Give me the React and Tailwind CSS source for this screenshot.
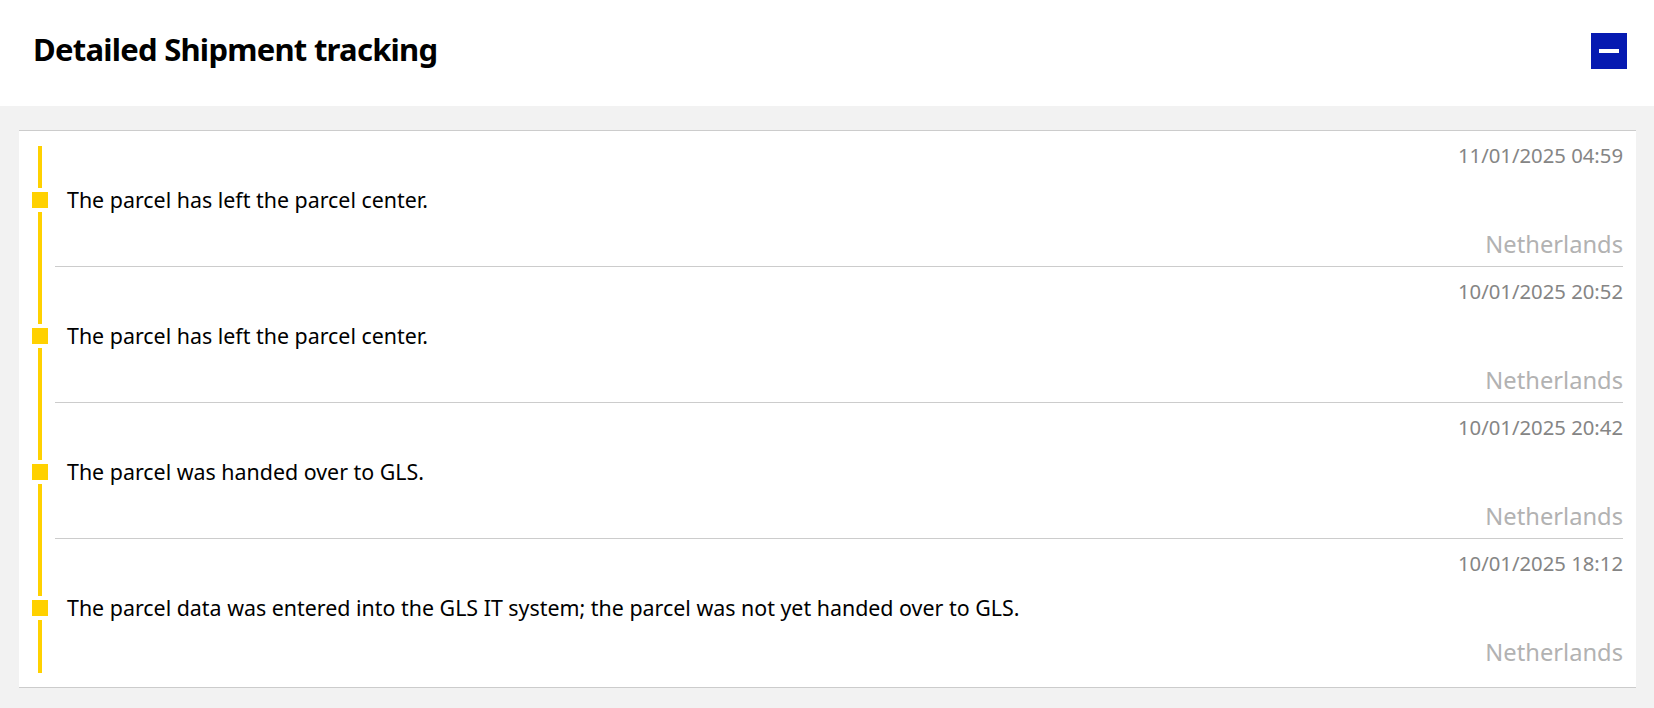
import React from "react";

const events = [
  { date: "11/01/2025 04:59", text: "The parcel has left the parcel center.", country: "Netherlands" },
  { date: "10/01/2025 20:52", text: "The parcel has left the parcel center.", country: "Netherlands" },
  { date: "10/01/2025 20:42", text: "The parcel was handed over to GLS.", country: "Netherlands" },
  {
    date: "10/01/2025 18:12",
    text: "The parcel data was entered into the GLS IT system; the parcel was not yet handed over to GLS.",
    country: "Netherlands",
  },
];

function Row({ ev, first, last }) {
  return (
    <div className={last ? "flex h-[135px]" : "flex h-[136px]"}>
      <div className="w-[36px] shrink-0">
        <div className="ml-[13px] flex h-full w-4 flex-col items-center">
          <div className={first ? "mt-[15px] h-[42px] w-1 bg-[#ffd100]" : "h-[57px] w-1 bg-[#ffd100]"} />
          <div className="mt-1 h-4 w-4 shrink-0 bg-[#ffd100]" />
          <div className={last ? "mt-1 mb-[1px] w-1 flex-1 bg-[#ffd100]" : "mt-1 w-1 flex-1 bg-[#ffd100]"} />
        </div>
      </div>
      <div
        className={
          "mr-[13px] flex flex-1 flex-col pt-[10px] pb-2 " + (last ? "" : "border-b border-[#cccccc]")
        }
      >
        <div className="text-right text-[20.3px] leading-7 text-[#858585]">{ev.date}</div>
        <div className="flex flex-1 items-center pl-[12px] text-[21.4px] leading-7 text-black">{ev.text}</div>
        <div className="text-right text-[23.7px] leading-7 text-[#b2b2b2]">{ev.country}</div>
      </div>
    </div>
  );
}

export default function App() {
  return (
    <div className="min-h-[708px] bg-[#f2f2f2] font-['Noto_Sans',sans-serif]">
      <div className="flex h-[106px] items-start justify-between bg-white pl-[33px] pr-[27px]">
        <h1 className="pt-[31px] text-[31px] font-bold leading-[36px] tracking-[-0.75px] text-black">
          Detailed Shipment tracking
        </h1>
        <button className="mt-[33px] flex h-9 w-9 items-center justify-center bg-[#061ab1]">
          <span className="block h-1 w-5 bg-white" />
        </button>
      </div>
      <div className="pl-[19px] pr-[18px] pt-[24px] pb-[20px]">
        <div className="border-y border-[#cccccc] bg-white pb-[13px]">
          {events.map((ev, i) => (
            <Row key={i} ev={ev} first={i === 0} last={i === events.length - 1} />
          ))}
        </div>
      </div>
    </div>
  );
}
